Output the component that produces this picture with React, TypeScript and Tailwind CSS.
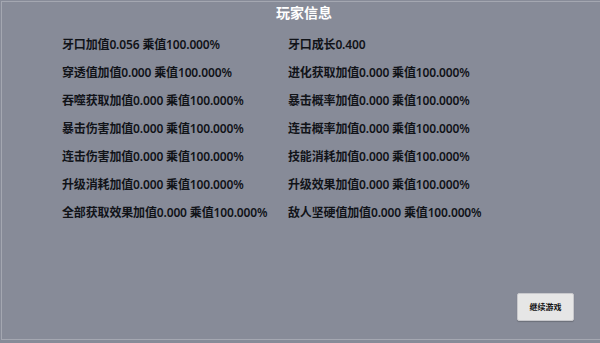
import React from "react";

const left = [
  "牙口加值0.056 乘值100.000%",
  "穿透值加值0.000 乘值100.000%",
  "吞噬获取加值0.000 乘值100.000%",
  "暴击伤害加值0.000 乘值100.000%",
  "连击伤害加值0.000 乘值100.000%",
  "升级消耗加值0.000 乘值100.000%",
  "全部获取效果加值0.000 乘值100.000%",
];

const right = [
  "牙口成长0.400",
  "进化获取加值0.000 乘值100.000%",
  "暴击概率加值0.000 乘值100.000%",
  "连击概率加值0.000 乘值100.000%",
  "技能消耗加值0.000 乘值100.000%",
  "升级效果加值0.000 乘值100.000%",
  "敌人坚硬值加值0.000 乘值100.000%",
];

export default function App() {
  return (
    <div
      className="w-[600px] h-[343px] bg-[#878b98] pt-px pl-px pb-[3px] overflow-hidden"
      style={{ fontFamily: '"Noto Sans", "Noto Sans CJK SC", sans-serif' }}
    >
      <div className="h-full border-t border-l border-b border-[#a4a7b1] flex flex-col">
        <div className="h-[22px] flex items-center justify-center pl-[6px] text-white font-bold text-[14px] leading-none">
          玩家信息
        </div>
        <div className="grid grid-cols-[226px_1fr] pl-[60px] pt-[12px] gap-y-[10px] text-[12px] leading-[18px] font-semibold tracking-[-0.15px] text-[#111318]">
          {left.map((l, i) => (
            <React.Fragment key={i}>
              <div>{l}</div>
              <div>{right[i]}</div>
            </React.Fragment>
          ))}
        </div>
        <div className="flex-1 flex items-end justify-end pr-[26px] pb-[18px]">
          <button className="w-[57px] h-[28px] bg-[#e6e6e6] border border-[#c8c8cc] rounded-[2px] shadow-[0_1px_1px_rgba(0,0,0,0.2)] text-[8px] font-bold text-[#111] flex items-center justify-center">
            继续游戏
          </button>
        </div>
      </div>
    </div>
  );
}
